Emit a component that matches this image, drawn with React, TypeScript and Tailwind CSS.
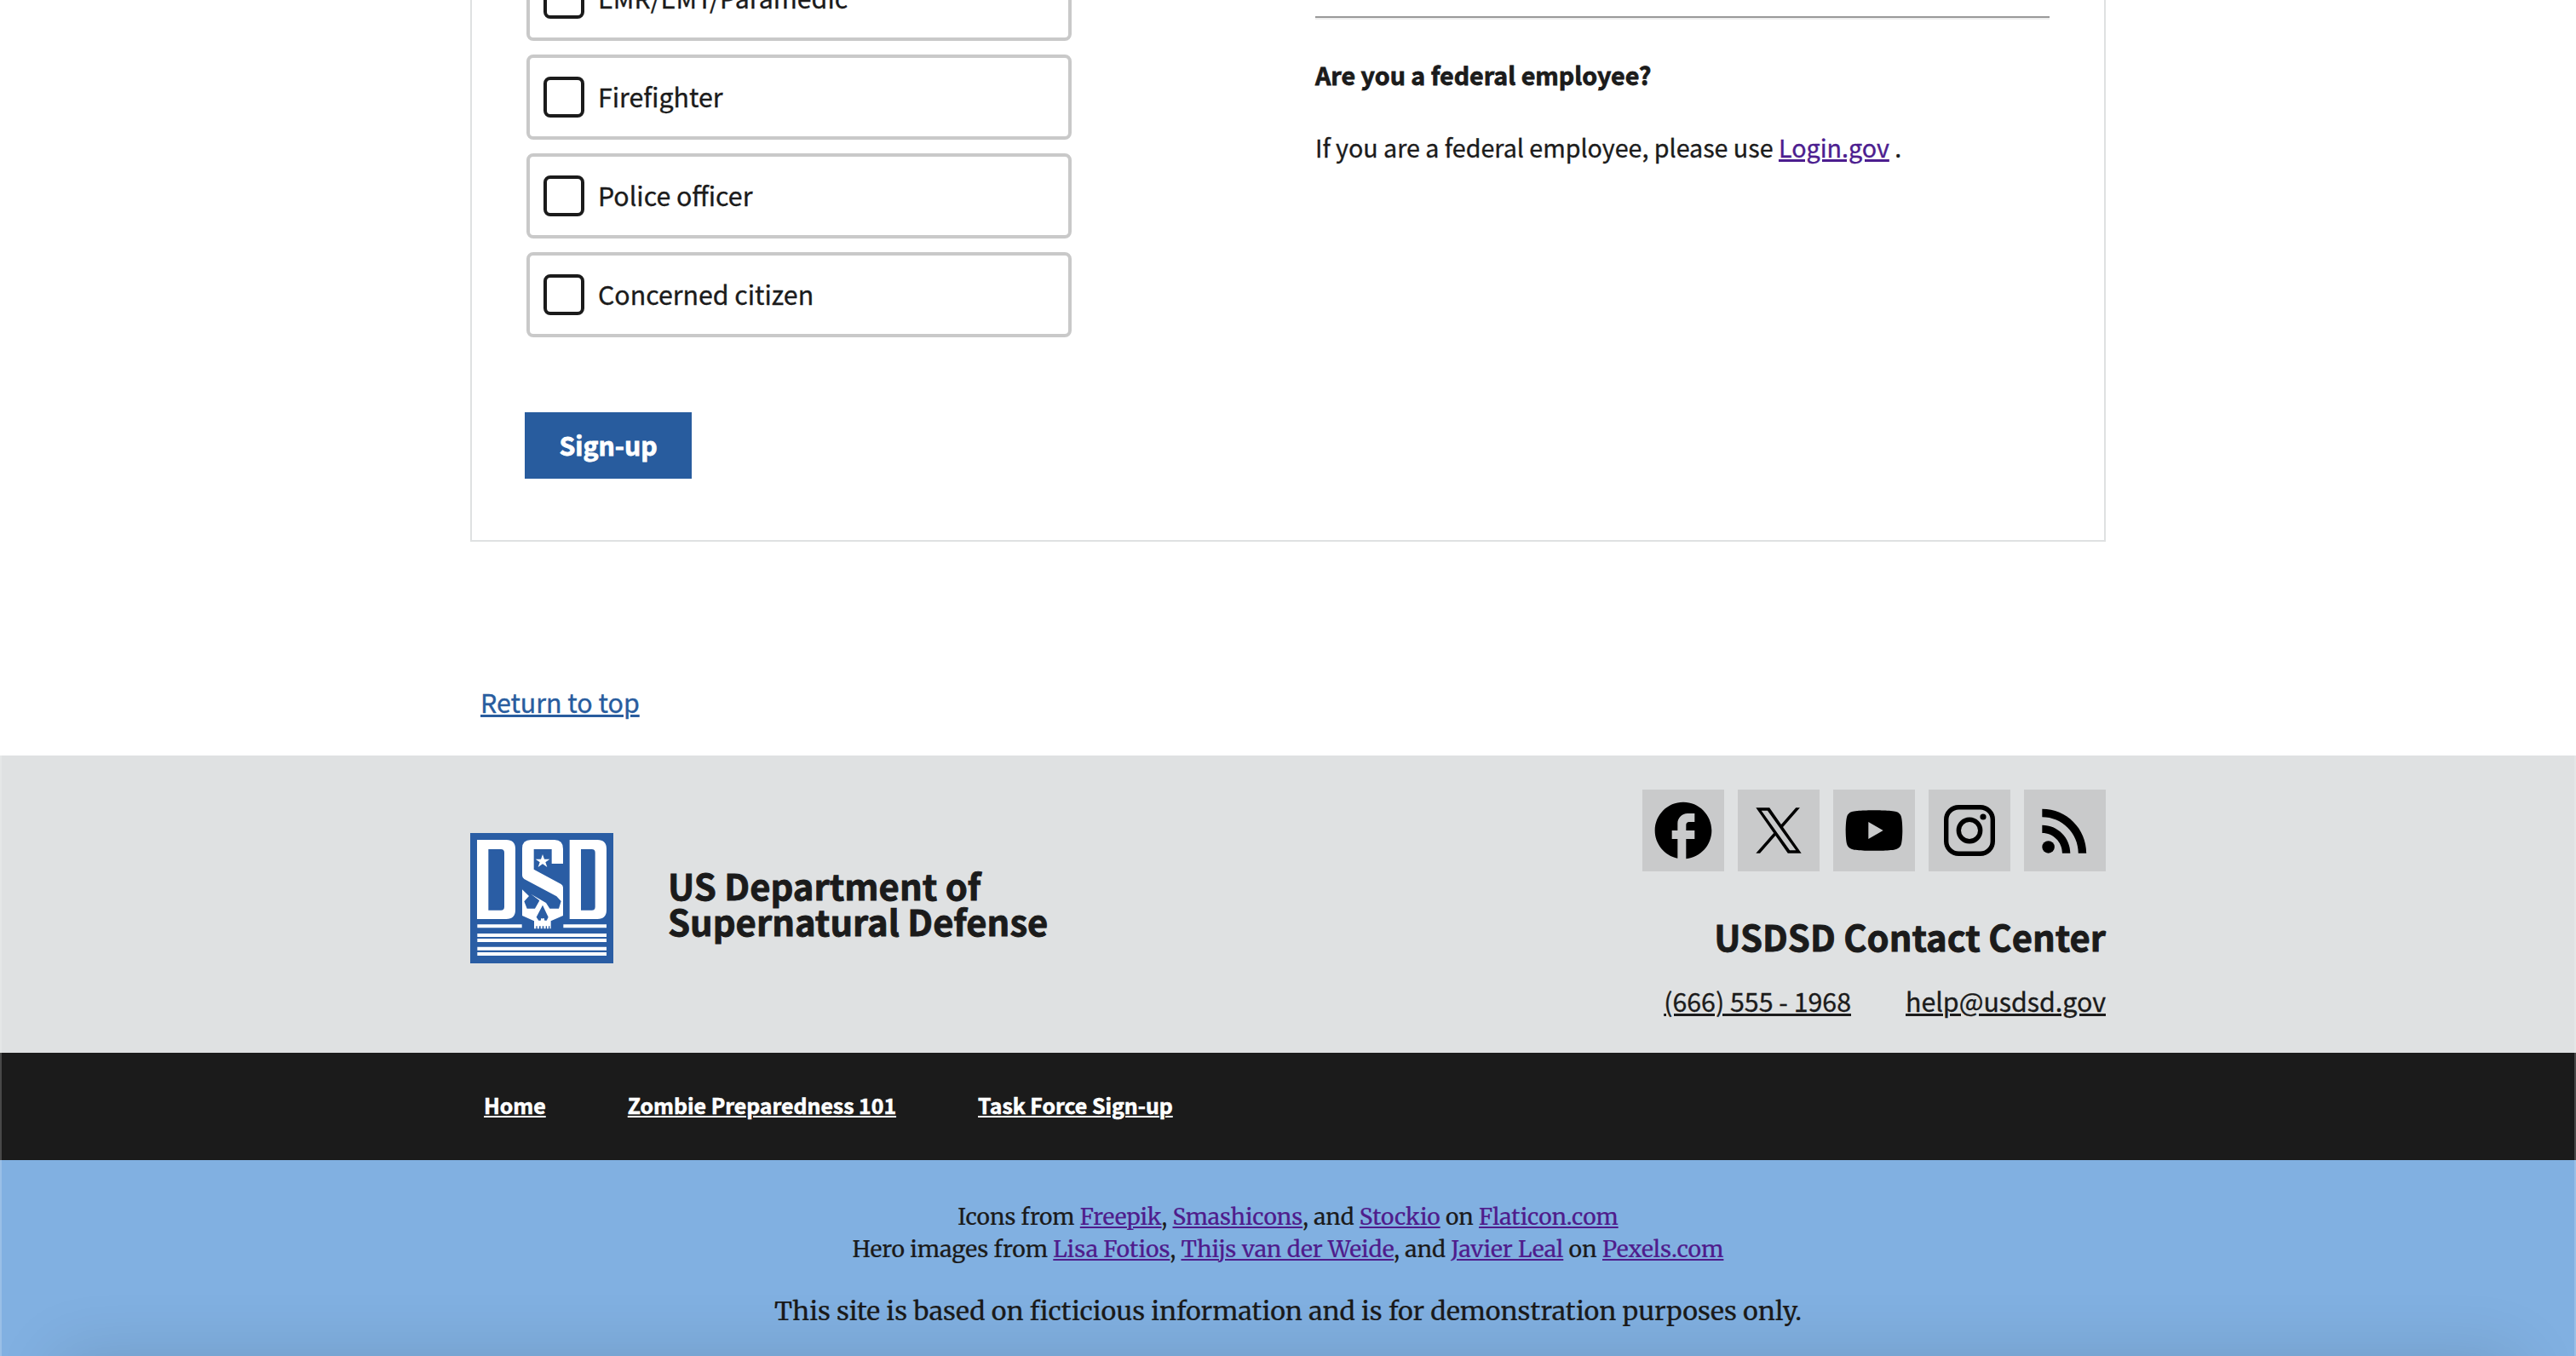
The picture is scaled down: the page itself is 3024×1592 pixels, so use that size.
import type { ReactNode } from "react";

const tasks = ["EMR/EMT/Paramedic", "Firefighter", "Police officer", "Concerned citizen"];

function Tile({ label }: { label: string }) {
  return (
    <label className="flex h-[100px] w-[640px] items-center gap-4 rounded-lg border-4 border-[#c9c9c9] pl-4">
      <span className="size-12 rounded-lg border-4 border-[#1b1b1b] bg-white" />
      <span className="pb-0.5 text-[30.3px] leading-10">{label}</span>
    </label>
  );
}

function Social({ label, children }: { label: string; children: ReactNode }) {
  return (
    <a aria-label={label} className="flex size-24 items-center justify-center bg-[#c9cacb]">
      <svg viewBox="0 0 24 24" className="size-20" fill="black">
        {children}
      </svg>
    </a>
  );
}

function Credit({ children }: { children: ReactNode }) {
  return (
    <a className="text-[#4f1c8c] underline decoration-2 underline-offset-2">{children}</a>
  );
}

function Logo() {
  return (
    <svg viewBox="36 54 504 459" className="mt-[51px] h-[153px] w-[168px]" fill="white">
      <rect x="36" y="54" width="504" height="459" fill="#2a5da4" />
      <path
        fillRule="evenodd"
        d="M60 78H163Q195 78 195 110V325Q195 357 163 357H60ZM100 111V326H144Q156 326 156 314V123Q156 111 144 111Z"
      />
      <path
        fillRule="evenodd"
        d="M386 78H484Q516 78 516 110V325Q516 357 484 357H386ZM426 111V326H464Q476 326 476 314V123Q476 111 464 111Z"
      />
      <path d="M363 162V110Q363 78 333 78H250Q219 78 219 108V203Q219 211 226 216L340 277L356 294L348 320H316L303 300L250 269L280 292L264 320H236L226 295L243 276L219 253V345L261 364V391H268V382H272V391H279V382H284V391H290V382H295V391H302V382H306V391H312V382H316V391H320V364L363 345V246Q363 238 356 234L260 182V111H323V162Z" />
      <path
        fill="#2a5da4"
        d="M291 308L311 350L305 362H298L296 354H292L291 358L289 354H286L284 362H277L269 350Z"
      />
      <path d="M291 129L297 146H316L301 157L307 174L291 163L275 174L281 157L266 146H285Z" />
      <path d="M61 376H218V388H61ZM364 376H516V388H364ZM61 408H516V420H61ZM61 426H516V438H61ZM61 455H516V467H61ZM61 474H516V486H61Z" />
    </svg>
  );
}

export default function App() {
  return (
    <div className="h-[1592px] w-[3024px] overflow-hidden bg-white font-['Noto_Sans_CJK_SC','Source_Sans_3',sans-serif] text-[#1b1b1b] [-webkit-text-stroke:0.35px]">
      <main className="mx-auto h-[887px] w-[1920px]">
        <section className="flex h-[636px] overflow-hidden border-2 border-t-0 border-[#dfe1e2]">
          <form className="-mt-[52px] w-[990px] pl-16">
            <div className="flex flex-col gap-4">
              {tasks.map((t) => (
                <Tile key={t} label={t} />
              ))}
            </div>
            <button
              type="button"
              className="mt-[88px] -ml-0.5 flex h-[78px] w-[196px] items-center justify-center bg-[#285c9e] pb-0.5 text-[30.2px] leading-10 font-bold text-white [-webkit-text-stroke:0.8px]"
            >
              Sign-up
            </button>
          </form>
          <div className="mt-[19px] w-[862px]">
            <hr className="border-t-2 border-b-2 border-t-[#9a9a9a] border-b-[#eeeeee]" />
            <h3 className="mt-[45px] text-[28.6px] leading-10 font-bold [-webkit-text-stroke:0.8px]">
              Are you a federal employee?
            </h3>
            <p className="mt-[45px] text-[28.65px] leading-10">
              If you are a federal employee, please use{" "}
              <a className="text-[#4c1d8f] underline decoration-3 underline-offset-2">Login.gov</a> .
            </p>
          </div>
        </section>
        <div className="mt-[165px] pl-3 text-[30.35px] leading-[46px]">
          <a className="text-[#285c9e] underline decoration-3 underline-offset-2">Return to top</a>
        </div>
      </main>

      <footer className="relative h-[705px] overflow-hidden">
        <div className="h-[349px] bg-[#dfe1e2] pt-10">
          <div className="mx-auto flex w-[1920px] items-start">
            <Logo />
            <p className="mt-[91px] ml-16 text-[41.8px] leading-[42px] font-bold [-webkit-text-stroke:0.9px]">
              US Department of
              <br />
              Supernatural Defense
            </p>
            <div className="ml-auto flex flex-col items-end">
              <div className="flex gap-4">
                <Social label="Facebook">
                  <path d="M22 12c0-5.52-4.48-10-10-10S2 6.48 2 12c0 4.84 3.44 8.87 8 9.8V15H8v-3h2V9.5C10 7.57 11.57 6 13.5 6H16v3h-2c-.55 0-1 .45-1 1v2h3v3h-3v6.95c5.05-.5 9-4.76 9-9.95z" />
                </Social>
                <Social label="X">
                  <path d="M13.522 10.775 19.48 4h-1.412l-5.172 5.883L8.764 4H4l6.247 8.896L4 20h1.412l5.461-6.212L15.236 20H20l-6.478-9.225Zm-1.933 2.199-.633-.886L5.92 5.04h2.168l4.064 5.688.632.886 5.283 7.394H15.9l-4.31-6.034Z" />
                </Social>
                <Social label="YouTube">
                  <path d="M21.58 7.19c-.23-.86-.91-1.54-1.77-1.77C18.25 4.85 12 4.85 12 4.85s-6.25 0-7.81.57c-.86.23-1.54.91-1.77 1.77C2 8.75 2 12 2 12s0 3.25.42 4.81c.23.86.91 1.54 1.77 1.77C5.75 19.15 12 19.15 12 19.15s6.25 0 7.81-.57c.86-.23 1.54-.91 1.77-1.77C22 15.25 22 12 22 12s0-3.25-.42-4.81zM10 15V9l5.2 3-5.2 3z" />
                </Social>
                <Social label="Instagram">
                  <g fill="none" stroke="black" strokeWidth="1.62">
                    <rect x="3.81" y="3.81" width="16.38" height="16.38" rx="4.4" />
                    <circle cx="12" cy="12" r="3.81" />
                  </g>
                  <circle cx="16.8" cy="7.2" r="1.08" />
                </Social>
                <Social label="RSS">
                  <circle cx="6.18" cy="17.82" r="2.18" />
                  <path d="M4 4.44v2.83c7.03 0 12.73 5.7 12.73 12.73h2.83c0-8.59-6.97-15.56-15.56-15.56zm0 5.66v2.83c3.9 0 7.07 3.17 7.07 7.07h2.83c0-5.47-4.43-9.9-9.9-9.9z" />
                </Social>
              </div>
              <p className="mt-[52px] text-[41.75px] leading-[48px] font-bold [-webkit-text-stroke:0.9px]">
                USDSD Contact Center
              </p>
              <div className="mt-8 flex gap-16 text-[30.35px] leading-10">
                <a className="underline decoration-3 underline-offset-2">(666) 555 - 1968</a>
                <a className="underline decoration-3 underline-offset-2">help@usdsd.gov</a>
              </div>
            </div>
          </div>
        </div>

        <div className="h-[126px] bg-[#1b1b1b]">
          <nav className="mx-auto flex h-full w-[1920px] items-center gap-24 pb-1 pl-4 text-[24.85px] leading-10 font-bold text-white [-webkit-text-stroke:0.6px]">
            <a className="underline decoration-2 underline-offset-2">Home</a>
            <a className="underline decoration-2 underline-offset-2">Zombie Preparedness 101</a>
            <a className="underline decoration-2 underline-offset-2">Task Force Sign-up</a>
          </nav>
        </div>

        <div className="h-[230px] bg-[#81b0e1] pt-12 text-center font-['Merriweather','Noto_Serif','DejaVu_Serif_Condensed',serif] [-webkit-text-stroke:0.2px]">
          <p className="text-[26.35px] leading-[38px]">
            Icons from <Credit>Freepik</Credit>, <Credit>Smashicons</Credit>, and{" "}
            <Credit>Stockio</Credit> on <Credit>Flaticon.com</Credit>
          </p>
          <p className="text-[26.55px] leading-[38px]">
            Hero images from <Credit>Lisa Fotios</Credit>, <Credit>Thijs van der Weide</Credit>, and{" "}
            <Credit>Javier Leal</Credit> on <Credit>Pexels.com</Credit>
          </p>
          <p className="mt-[33px] text-[30.35px] leading-10">
            This site is based on ficticious information and is for demonstration purposes only.
          </p>
        </div>

        <div className="pointer-events-none absolute inset-0 border-x-2 border-white/20" />
        <div className="pointer-events-none absolute inset-x-[70px] top-full h-40 shadow-[0_0_80px_rgba(0,0,0,0.13)]" />
      </footer>
    </div>
  );
}
